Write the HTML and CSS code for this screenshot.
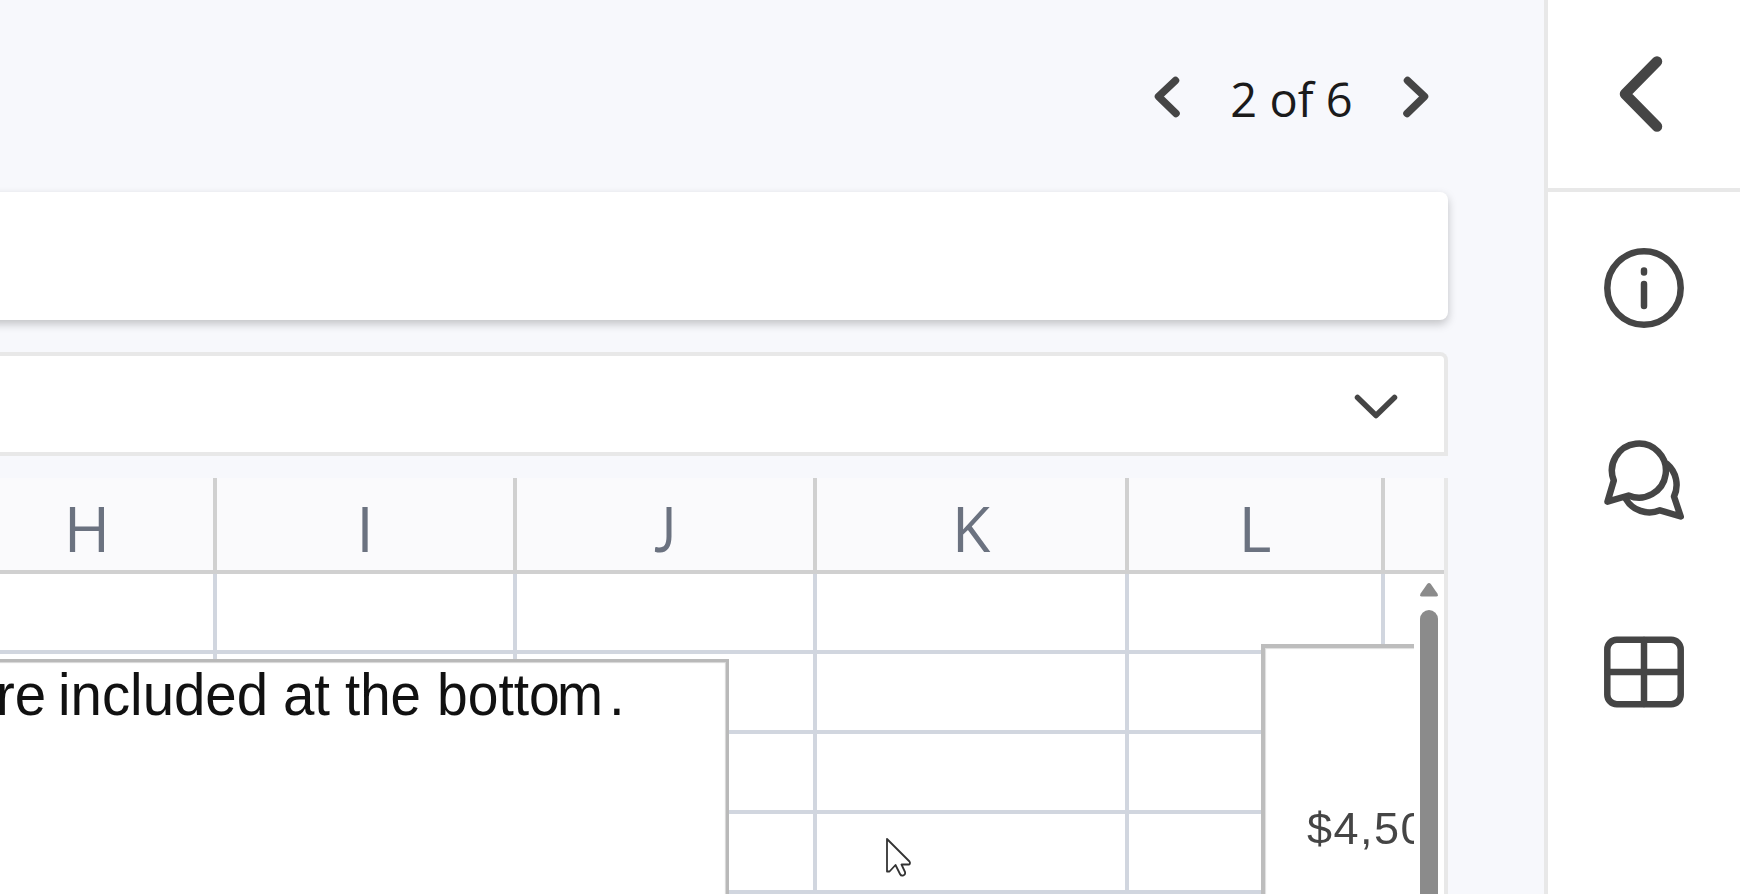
FILE: index.html
```html
<!DOCTYPE html>
<html lang="en">

<head>
    <meta charset="UTF-8" />
    <meta name="viewport" content="width=device-width, initial-scale=1.0" />
    <title>Workbook viewer</title>
    <link rel="stylesheet" href="styles.css">
</head>

<body>
    <main class="viewer">
        <nav class="pager">
            <button type="button" aria-label="Previous">
                <svg width="26" height="42" viewBox="0 0 26 42">
                    <path d="M21.500 4.500 4.500 20.500l17.500 17" />
                </svg>
            </button>
            <span class="pager-text">2 of 6</span>
            <button type="button" aria-label="Next">
                <svg width="26" height="42" viewBox="0 0 26 42">
                    <path d="M4.500 4.500 21.500 20.500 4 37.500" />
                </svg>
            </button>
        </nav>

        <div class="toolbar"></div>

        <div class="formula-bar">
            <svg class="expand" width="44" height="26" viewBox="0 0 44 26">
                <path d="M3.500 3.500 22 21.500 40.500 3.500" />
            </svg>
        </div>

        <section class="sheet">
            <div class="row head">
                <div><span>H</span></div>
                <div><span>I</span></div>
                <div><span class="hook">J</span></div>
                <div><span>K</span></div>
                <div><span>L</span></div>
                <div></div>
            </div>
            <div class="row"><div></div><div></div><div></div><div></div><div></div><div></div></div>
            <div class="row"><div></div><div></div><div></div><div></div><div></div><div></div></div>
            <div class="row"><div></div><div></div><div></div><div></div><div></div><div></div></div>
            <div class="row"><div></div><div></div><div></div><div></div><div></div><div></div></div>

            <!-- drawings floating above the cells -->
            <div class="note">
                <p><span class="w-re">re</span> <span class="w-included">included</span> <span class="w-at">at</span> <span class="w-the">the</span> <span class="w-bottom">bott<em>o</em>m</span><span class="w-dot">.</span></p>
            </div>
            <div class="chart"><span>$4,50</span></div>

            <div class="scrollbar">
                <svg width="18" height="14" viewBox="0 0 18 14">
                    <path d="M7.200 1Q9-.8 10.800 1l6.600 9.600q1.300 3-1.200 3H1.800q-2.500 0-1.200-3z" />
                </svg>
                <div class="thumb"></div>
            </div>
        </section>
    </main>

    <aside class="sidebar">
        <button type="button" class="collapse" aria-label="Collapse">
            <svg width="44" height="76" viewBox="0 0 44 76">
                <path d="M38 5.500 6 38l32 32.500" />
            </svg>
        </button>
        <div class="tools">
            <svg width="80" height="80" viewBox="0 0 80 80">
                <circle cx="40" cy="40" r="36.700" />
                <path d="M40 22.500v2M40 36v22" />
            </svg>
            <svg width="80" height="80" viewBox="0 0 80 80">
                <path d="M24.500 55.500A27 27 0 1 0 9.800 40.500L3.500 61.700z" />
                <path d="M63 24A27.500 27.500 0 0 1 70 56.500L76.700 76.500 56 70.300A27.500 27.500 0 0 1 21.500 58.500" />
            </svg>
            <svg width="80" height="72" viewBox="0 0 80 72">
                <rect x="3.300" y="3.800" width="73.400" height="64.400" rx="9.500" />
                <path d="M40 4v64M4 36h72" />
            </svg>
        </div>
    </aside>

    <svg class="cursor" width="26" height="40" viewBox="0 0 26 40">
        <path d="M1 1v32.500h2.500L9.500 27l4.500 9c1.500 3 6 1.500 5-2l-3.500-7.500h7.500c1 0 1.300-2 .5-3z" />
    </svg>
</body>

</html>
```

FILE: styles.css
```css
:root {
    --bg-color: #f7f8fc;
    --border-color: #e8e8e8;
    --head-line: #d0d0d0;
    --grid-line: #d1d6df;
    --icon-color: #454545;
}

* {
    box-sizing: border-box;
}

body {
    margin: 0;
    height: 894px;
    display: flex;
    overflow: hidden;
    background: var(--bg-color);
    font-family: 'Open Sans', sans-serif;
}

button {
    display: flex;
    padding: 0;
    border: none;
    background: none;
}

svg {
    display: block;
    flex: none;
    fill: none;
    stroke: var(--icon-color);
    stroke-linecap: round;
    stroke-linejoin: round;
}

.viewer {
    width: 1544px;
    padding-right: 96px;
    flex: none;
}

.pager {
    height: 192px;
    padding: 1px 19px 0 0;
    display: flex;
    justify-content: flex-end;
    align-items: center;
}

.pager svg {
    stroke-width: 7.5;
}

.pager-text {
    width: 223px;
    padding-top: 5px;
    text-align: center;
    font-size: 47px;
    line-height: 64px;
    color: #1b1b1b;
}

.toolbar {
    height: 128px;
    margin-left: -16px;
    background: #fff;
    border-radius: 8px;
    box-shadow: 0 4px 10px rgba(0, 0, 0, 0.22);
}

.formula-bar {
    height: 104px;
    margin-top: 32px;
    padding: 6px 46px 0 0;
    display: flex;
    align-items: center;
    justify-content: flex-end;
    background: #fff;
    border: 4px solid var(--border-color);
    border-left: none;
    border-top-right-radius: 8px;
}

.expand {
    stroke-width: 5.5;
}

.sheet {
    position: relative;
    height: 416px;
    margin-top: 22px;
    overflow: hidden;
    background: #fff;
    border-right: 4px solid var(--border-color);
}

.row {
    display: grid;
    grid-template-columns: 217px 300px 300px 312px 256px 1fr;
    height: 80px;
}

.row div {
    border-right: 4px solid var(--grid-line);
    border-bottom: 4px solid var(--grid-line);
}

.row div:last-child {
    border-right: none;
}

.row.head {
    grid-template-rows: 96px;
    height: 96px;
    background: #fafafc;
}

.head div {
    border-color: var(--head-line);
    font-size: 63px;
    line-height: 100px;
    text-align: center;
    color: #6b7280;
}

.head div:first-child {
    padding-right: 39px;
}

.head .hook {
    display: inline-block;
    line-height: 1;
    font-family: Lato, sans-serif;
    font-size: 62px;
    transform: scaleX(0.82);
}

.note {
    position: absolute;
    top: 181px;
    left: 0;
    width: 729px;
    height: 240px;
    background: #fff;
    border-top: 3px solid #b9b9b9;
    border-right: 3px solid #b9b9b9;
    box-shadow: inset -1px 1px 1px #d5d5d5;
}

.note p {
    display: flex;
    margin: 0 0 0 -4px;
    padding-top: 1px;
    font-family: 'Liberation Sans', sans-serif;
    font-size: 60px;
    line-height: 64px;
    color: #111;
    filter: blur(0.7px);
}

.note span {
    flex: none;
    transform-origin: 0 50%;
    transform: scaleX(0.94);
}

.w-re {
    width: 62px;
}

.w-included {
    width: 225px;
}

.w-at {
    width: 62px;
}

.note .w-the {
    width: 92px;
    transform: scaleX(0.91);
}

.note .w-bottom {
    width: 172px;
    transform: scaleX(0.92);
}

.w-bottom em {
    font-style: normal;
    letter-spacing: -3px;
}

.chart {
    position: absolute;
    top: 166px;
    left: 1261px;
    width: 153px;
    height: 260px;
    overflow: hidden;
    padding: 155px 0 0 42px;
    background: #fff;
    border-top: 4px solid #bdbdbd;
    border-left: 4px solid #bdbdbd;
    box-shadow: inset 1px 1px 1px #dedede;
    font-family: 'Liberation Sans', sans-serif;
    font-size: 45px;
    line-height: 52px;
    letter-spacing: 1.5px;
    color: #454545;
}

.chart span {
    filter: blur(0.7px);
}

.scrollbar {
    position: absolute;
    top: 96px;
    right: 0;
    bottom: 0;
    width: 30px;
    padding: 9px 6px 0;
    background: #fff;
}

.scrollbar path {
    fill: #8b8b8b;
    stroke: none;
}

.thumb {
    height: 400px;
    margin-top: 13px;
    border-radius: 9px;
    background: #8b8b8b;
}

.sidebar {
    flex: 1;
    background: #fff;
    border-left: 4px solid var(--border-color);
}

.collapse {
    width: 100%;
    height: 192px;
    padding: 56px 0 0 71px;
    border-bottom: 4px solid var(--border-color);
}

.collapse svg {
    stroke-width: 10.5;
}

.tools {
    display: flex;
    flex-direction: column;
    align-items: center;
    gap: 112px;
    padding-top: 56px;
}

.tools svg {
    stroke-width: 6.5;
}

.tools svg:last-child {
    margin-top: 4px;
}

.cursor {
    position: absolute;
    top: 838px;
    left: 886px;
    fill: #fff;
    stroke: #333;
    stroke-width: 1.8;
}
```
